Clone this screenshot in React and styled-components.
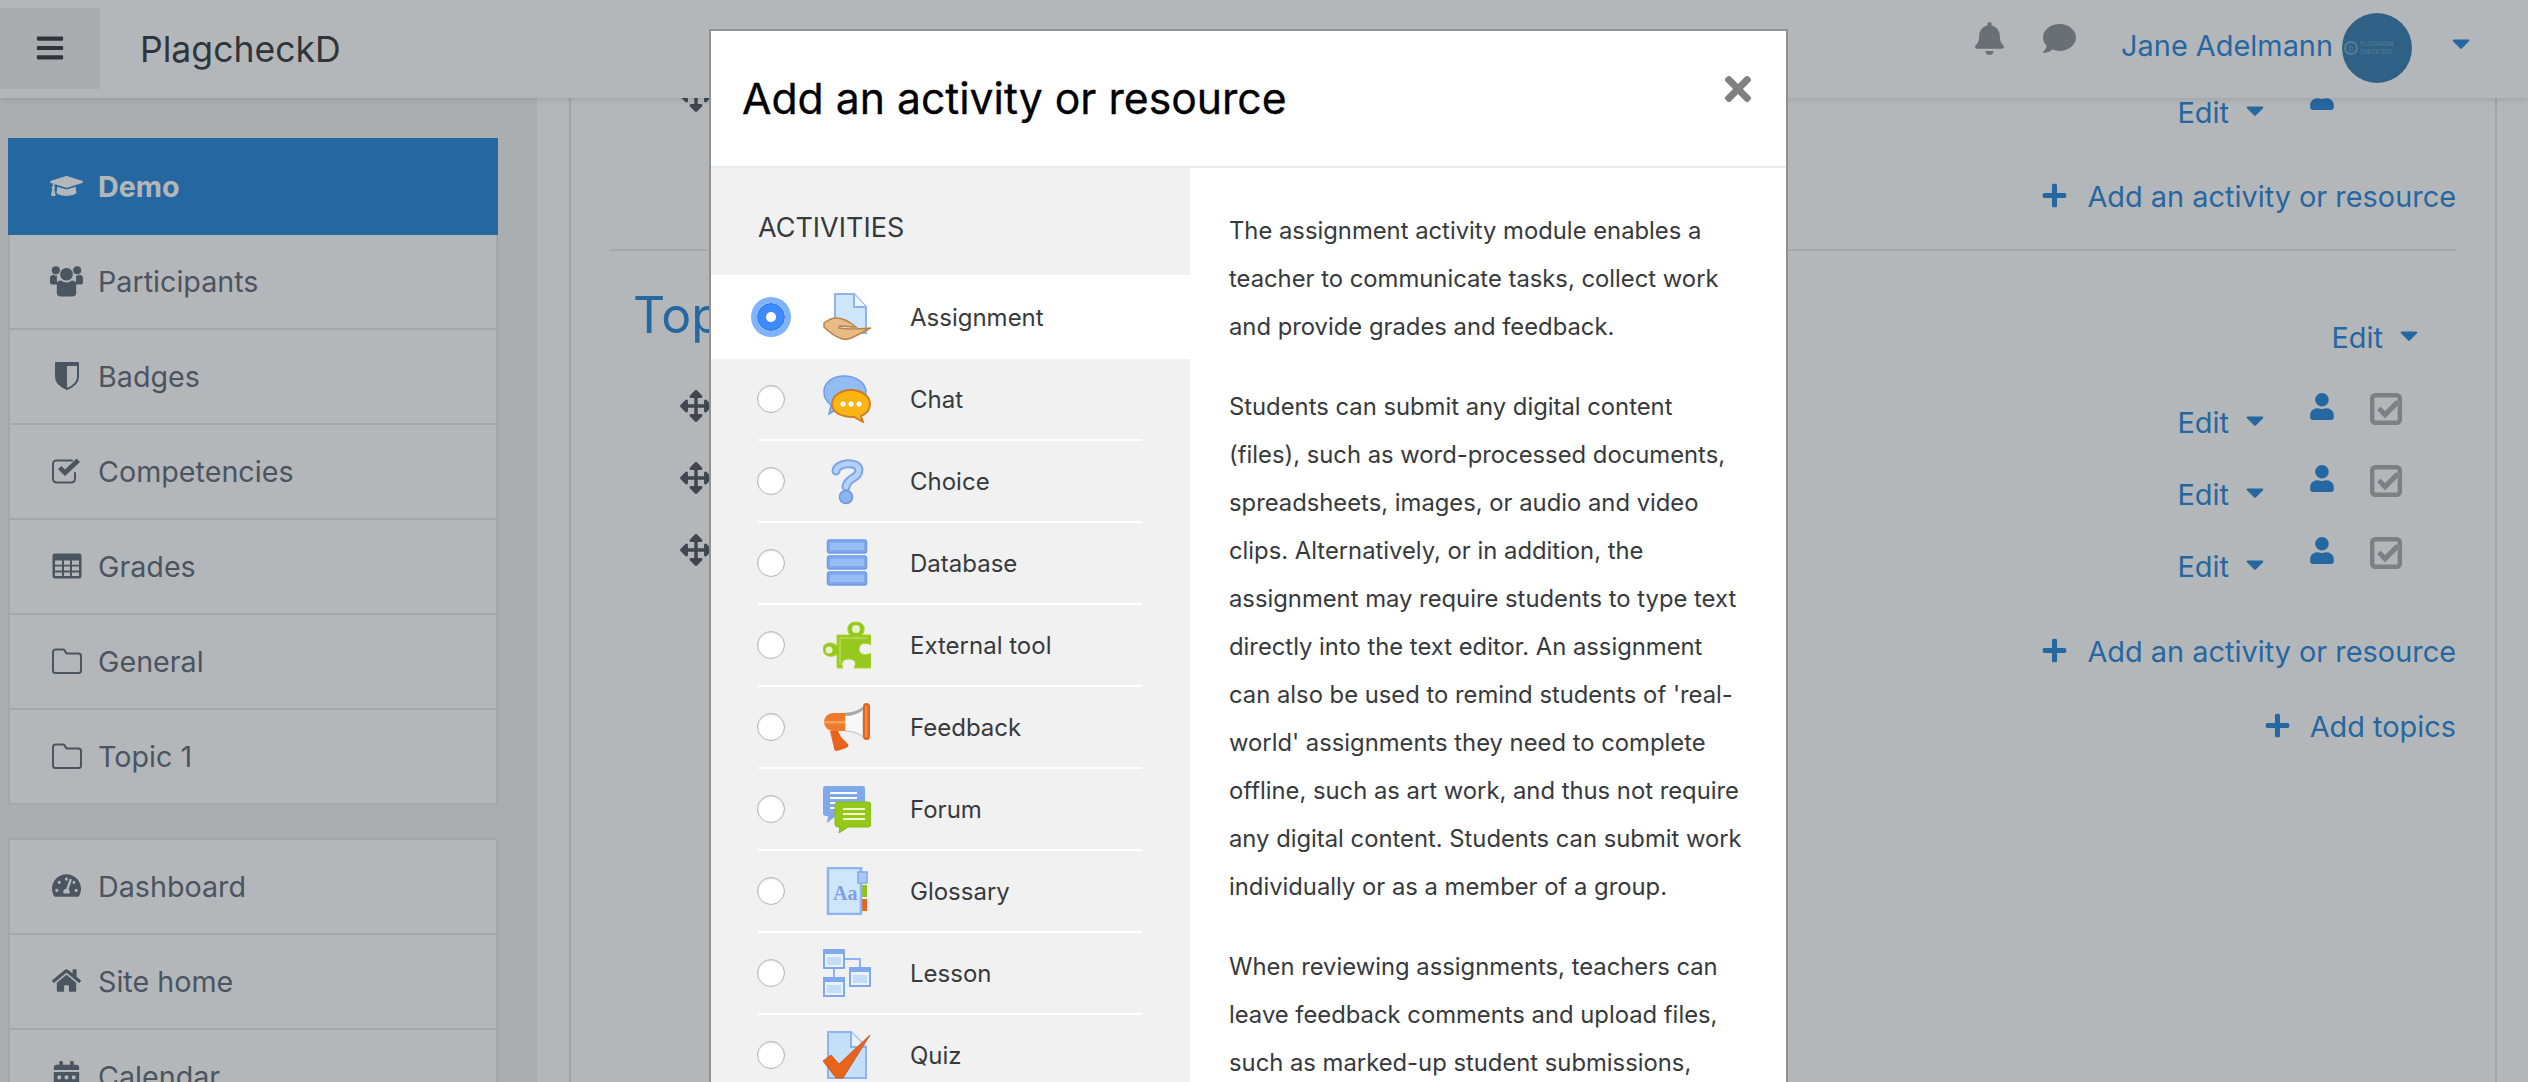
import React from 'react';
import styled, { createGlobalStyle } from 'styled-components';
import {
  FaGraduationCap, FaTachometerAlt, FaHome, FaCalendarAlt, FaBell, FaComment,
  FaUser, FaPlus, FaBars, FaArrowsAlt, FaTimes, FaCaretDown,
} from 'react-icons/fa';

const Global = createGlobalStyle`
  html, body { margin: 0; padding: 0; height: 100%; overflow: hidden; background: #fff; }
  * { box-sizing: border-box; }
  body { font-family: Inter, "Liberation Sans", sans-serif; -webkit-font-smoothing: antialiased; }
`;

const BLUE = '#1e80d6';

const Viewport = styled.div`
  position: relative;
  width: 2528px;
  height: 1082px;
  overflow: hidden;
`;
const Page = styled.div`
  display: flex;
  width: 100%;
  height: 100%;
  background: #fff;
`;

/* top bar */
const Navbar = styled.header`
  position: absolute;
  top: 0; left: 0; right: 0;
  height: 98px;
  z-index: 2;
  background: #fff;
  box-shadow: 0 2px 6px rgba(0,0,0,.12);
  display: flex;
  align-items: center;
  padding-right: 58px;
`;
const MenuButton = styled.div`
  width: 100px;
  height: 81px;
  margin-top: -2px;
  background: #eff0f0;
  display: flex;
  align-items: center;
  justify-content: center;
  color: #2c3236;
  font-size: 30px;
`;
const Brand = styled.div`
  margin-left: 40px;
  font-size: 35.6px;
  color: #2c3236;
  flex: 1;
`;
const NavIcon = styled.div`
  color: #8a8e92;
  display: flex;
  font-size: ${p => p.$size}px;
  margin-right: ${p => p.$gap}px;
  margin-top: -22px;
`;
const UserName = styled.div`
  font-size: 28.9px;
  color: ${BLUE};
  margin-top: -7px;
  margin-right: 9px;
`;
const Avatar = styled.div`
  width: 70px;
  height: 70px;
  border-radius: 50%;
  background: #2c78ab;
  color: #6ea3c6;
  display: flex;
  align-items: center;
  gap: 2px;
  padding-left: 2px;
  font-size: 5.5px;
  line-height: 8px;
  margin-top: -2px;
  margin-right: 40px;
  overflow: hidden;
`;
const AvatarMark = styled.span`
  width: 14px;
  height: 14px;
  flex: none;
  border: 2px solid #6ea3c6;
  border-radius: 50%;
  font-size: 9px;
  line-height: 10px;
  text-align: center;
`;
const Caret = styled(FaCaretDown)`
  color: ${BLUE};
  font-size: 30px;
  width: 18px;
  flex: none;
`;
const NavCaret = styled(Caret)`
  margin-top: -12px;
`;

/* side block */
const Sidebar = styled.aside`
  width: 537px;
  flex: none;
  background: #f0f1f1;
  padding: 138px 39px 0 8px;
`;
const NavGroup = styled.nav`
  border: 2px solid #e4e6e8;
  background: #fff;
  margin-bottom: 33px;
`;
const NavItem = styled.div`
  height: ${p => (p.$active ? 97 : p.$last ? 93 : 95)}px;
  margin: ${p => (p.$active ? '-2px -2px 0' : '0')};
  padding-left: ${p => (p.$active ? 42 : 40)}px;
  background: ${p => (p.$active ? BLUE : '#fff')};
  color: ${p => (p.$active ? '#fff' : '#5a6470')};
  border-bottom: ${p => (p.$active || p.$last ? '0' : '2px solid #e4e6e8')};
  font-size: 28.7px;
  font-weight: ${p => (p.$active ? 700 : 400)};
  display: flex;
  align-items: center;
`;
const NavGlyph = styled.span`
  width: 33px;
  margin-right: 15px;
  flex: none;
  display: flex;
  justify-content: ${p => (p.$wide ? 'flex-start' : 'center')};
  align-items: center;
  font-size: ${p => (p.$wide ? 40 : 29)}px;
  margin-top: -2px;
`;

/* main card */
const Content = styled.main`
  flex: none;
  width: 1928px;
  margin-left: 32px;
  border-left: 2px solid #e0e2e4;
  border-right: 2px solid #e0e2e4;
  padding: 75px 39px 0 39px;
  color: ${BLUE};
  font-size: 28.9px;
`;
const ItemRow = styled.div`
  height: 72px;
  display: flex;
  align-items: flex-start;
`;
const Grip = styled(FaArrowsAlt)`
  color: #464d55;
  font-size: 32px;
  margin: 5px 0 0 70px;
  flex: none;
`;
const EditMenu = styled.div`
  height: 36px;
  margin: ${p => (p.$head ? '35px 0 0 auto' : '20px 0 0 auto')};
  display: flex;
  align-items: center;
  line-height: 36px;
`;
const EditCaret = styled(Caret)`
  margin-left: 17px;
  margin-top: -6px;
`;
const Person = styled(FaUser)`
  font-size: 27px;
  width: 24px;
  margin: 8px 0 0 46px;
  flex: none;
`;
const CheckSlot = styled.span`
  width: 32px;
  height: 32px;
  margin: 8px 54px 0 36px;
  flex: none;
  color: #a6a9ac;
  display: block;
`;
const AddLine = styled.div`
  height: 36px;
  line-height: 36px;
  margin-top: ${p => p.$gap}px;
  display: flex;
  justify-content: flex-end;
  align-items: center;
`;
const AddIcon = styled(FaPlus)`
  font-size: 27px;
  margin-right: 19px;
  margin-top: -4px;
`;
const Rule = styled.hr`
  border: 0;
  border-top: 2px solid #e7e9ea;
  margin: 34px 0 0;
`;
const SectionHead = styled.div`
  height: 134px;
  padding: 34px 38px 0 23px;
  display: flex;
  align-items: flex-start;
`;
const SectionTitle = styled.h3`
  margin: 0;
  font-size: 50px;
  font-weight: 400;
  line-height: 60px;
`;

/* dimming layer */
const Backdrop = styled.div`
  position: absolute;
  inset: 0;
  z-index: 3;
  background: rgba(52,60,68,.37);
`;

/* dialog */
const Modal = styled.div`
  position: absolute;
  z-index: 4;
  top: 29px;
  left: 709px;
  width: 1079px;
  min-height: 1200px;
  background: #fff;
  border: 2px solid #8f9295;
`;
const ModalHead = styled.div`
  height: 137px;
  border-bottom: 2px solid #e9ecef;
  padding: 0 31px;
  display: flex;
  align-items: flex-start;
  justify-content: space-between;
`;
const ModalTitle = styled.h5`
  margin: 43px 0 0;
  font-size: 42.7px;
  line-height: 50px;
  font-weight: 400;
  color: #000;
  -webkit-text-stroke: .3px #000;
`;
const Close = styled(FaTimes)`
  color: #808080;
  font-size: 38px;
  margin: 39px -2px 0 0;
`;
const ModalBody = styled.div`
  display: flex;
  align-items: stretch;
`;
const Picker = styled.div`
  width: 479px;
  flex: none;
  background: #f1f1f1;
`;
const PickerHead = styled.div`
  height: 107px;
  padding: 40px 0 0 47px;
  font-size: 27px;
  line-height: 40px;
  color: #373a3c;
`;
const Option = styled.label`
  position: relative;
  display: flex;
  align-items: center;
  height: ${p => (p.$selected ? 84 : 82)}px;
  padding: ${p => (p.$selected ? 0 : '0 0 2px')} ;
  padding-left: 46px;
  background: ${p => (p.$selected ? '#fff' : 'transparent')};
  font-size: 24px;
  color: #373a3c;
  &::after {
    content: '';
    display: ${p => (p.$selected ? 'none' : 'block')};
    position: absolute;
    left: 47px;
    right: 48px;
    bottom: 0;
    height: 2px;
    background: #fff;
  }
`;
const Radio = styled.input.attrs({ type: 'radio', readOnly: true })`
  appearance: none;
  margin: 0;
  width: 28px;
  height: 28px;
  flex: none;
  border-radius: 50%;
  background: #fff;
  border: 1.5px solid #b4b4b4;
  box-shadow: inset 0 1px 2px rgba(0,0,0,.12);
  &:checked {
    background: radial-gradient(circle, #fff 0 4.5px, #3d8bff 5.5px);
    border: 1.5px solid #2373f0;
    box-shadow: 0 0 0 6px #80b3ff;
  }
`;
const Glyph = styled.svg`
  width: 48px;
  height: 48px;
  flex: none;
  margin: 0 39px 0 38px;
`;
const Describe = styled.div`
  flex: 1;
  padding: 39px 36px 0 39px;
  font-size: 23.8px;
  line-height: 48px;
  color: #373a3c;
  & p { margin: 0 0 32px; }
`;

const Users = () => (
  <svg width="34" height="32" viewBox="0 0 34 32" fill="currentColor">
    <circle cx="6" cy="5" r="4.200" /><circle cx="28" cy="5" r="4.200" />
    <path d="M0 13c0-2.500 2-3.500 4-3.500 1 .8 2 1.200 3.500 1.200C6.500 13 7 17 9 19.500H2c-1.500 0-2-1-2-2.500z" />
    <path d="M34 13c0-2.500-2-3.500-4-3.500-1 .8-2 1.200-3.500 1.200 1 2.300.5 6.300-1.500 8.800h7c1.500 0 2-1 2-2.500z" />
    <circle cx="17" cy="9" r="6.500" />
    <path d="M7 20c0-3 2-4.500 4.500-4.500 1.500 1.300 3.500 2 5.500 2s4-.7 5.500-2C25 15.500 27 17 27 20v8c0 2.500-1.500 4-4 4H11c-2.500 0-4-1.500-4-4z" />
  </svg>
);
const Shield = () => (
  <svg width="24" height="28" viewBox="0 0 24 28" fill="none">
    <path d="M1 1h22v14c0 5-5 9.500-11 12C6 24.500 1 20 1 15z" stroke="currentColor" strokeWidth="2" strokeLinejoin="round" />
    <path d="M1 1h11v26C6 24.500 1 20 1 15z" fill="currentColor" />
    <path d="M12 1h11v3H12z" fill="currentColor" />
  </svg>
);
const CheckedBox = () => (
  <svg width="30" height="26" viewBox="0 0 30 26" fill="none">
    <path d="M23 15v6a3.500 3.500 0 0 1-3.500 3.500h-15A3.500 3.500 0 0 1 1 21V6a3.500 3.500 0 0 1 3.500-3.500H20" stroke="currentColor" strokeWidth="2" strokeLinecap="round" />
    <path d="M6 11l7 7L28 4l-3.500-3.500L13 11.500 9.500 8z" fill="currentColor" />
  </svg>
);
const TableGlyph = () => (
  <svg width="30" height="26" viewBox="0 0 30 26">
    <path fillRule="evenodd" fill="currentColor" d="M3 .5h24A2.500 2.500 0 0 1 29.500 3v20a2.500 2.500 0 0 1-2.500 2.500H3A2.500 2.500 0 0 1 .5 23V3A2.500 2.500 0 0 1 3 .5zM3 7.500v4.300h7V7.500zm9 0v4.300h6V7.500zm8 0v4.300h7V7.500zM3 13.500v4h7v-4zm9 0v4h6v-4zm8 0v4h7v-4zM3 19.500v3.500h7v-3.500zm9 0v3.500h6v-3.500zm8 0v3.500h7v-3.500z" />
  </svg>
);
const FolderGlyph = () => (
  <svg width="30" height="26" viewBox="0 0 30 26" fill="none">
    <path d="M3.500 1.500h7.500a2 2 0 0 1 1.600.9L14.500 5.500h12A2.500 2.500 0 0 1 29 8v14.500a2.500 2.500 0 0 1-2.500 2.500h-23A2.500 2.500 0 0 1 1 22.500V4a2.500 2.500 0 0 1 2.500-2.500z" stroke="currentColor" strokeWidth="2" />
  </svg>
);
const GrayCheck = () => (
  <svg width="32" height="32" viewBox="0 0 32 32">
    <rect x="2.200" y="2.200" width="27.600" height="27.600" rx="3" fill="none" stroke="currentColor" strokeWidth="4.400" />
    <path d="M7 17l3.500-3.500 4.500 4.500L26 7l4 3.500L15 25.500z" fill="currentColor" stroke="#fff" strokeOpacity=".35" strokeWidth=".6" />
  </svg>
);

const AssignmentIcon = () => (
  <Glyph viewBox="0 0 48 48">
    <path d="M12 1h19l12 13v26H12z" fill="#cfe5fa" stroke="#8db4f0" strokeWidth="2" />
    <path d="M31 1v13h12" fill="#eef6fe" stroke="#8db4f0" strokeWidth="2" />
    <path d="M1 30c4-3 8-5 12-5 7 0 14 4 20 9-5 0-11-1-16-1l-1 2c10 2 21 1 32 0-4 2-13 7-20 10-4 2-7 2-11 0C11 43 5 38 1 34z" fill="#e9bb84" stroke="#b8844a" strokeWidth="1.500" />
  </Glyph>
);
const ChatIcon = () => (
  <Glyph viewBox="0 0 48 48">
    <path d="M21 1c12 0 22 7 22 16S33 33 21 33c-3 0-5 0-7 1l-8 5 2-9C4 27 1 22 1 17 1 8 9 1 21 1z" fill="#93bcf3" stroke="#6f9de8" strokeWidth="1.500" />
    <path d="M28 15c10 0 19 6 19 14 0 6-4 10-9 12l2 6-9-5C17 42 9 37 9 29c0-8 9-14 19-14z" fill="#fbb416" stroke="#d07a1e" strokeWidth="1.800" />
    <circle cx="20" cy="29" r="2.600" fill="#fff" /><circle cx="28" cy="29" r="2.600" fill="#fff" /><circle cx="36" cy="29" r="2.600" fill="#fff" />
  </Glyph>
);
const ChoiceIcon = () => (
  <Glyph viewBox="0 0 48 48">
    <path d="M13 14C13 6 35 3 36 13c0 9-12 7-13 17" fill="none" stroke="#7aa5ea" strokeWidth="9" strokeLinecap="round" />
    <path d="M13 14C13 6 35 3 36 13c0 9-12 7-13 17" fill="none" stroke="#b4d2f7" strokeWidth="5" strokeLinecap="round" />
    <circle cx="23" cy="40" r="6.500" fill="#8cb4ef" stroke="#6a97e6" strokeWidth="1.500" />
  </Glyph>
);
const DatabaseIcon = () => (
  <Glyph viewBox="0 0 48 48">
    {[1, 17, 33].map(y => (
      <g key={y}>
        <rect x="4.500" y={y} width="39" height="13" rx="2" fill="#7fa9ec" stroke="#6f9de8" strokeWidth="1.500" />
        <rect x="7" y={y + 3} width="34" height="7" fill="#98bdf2" />
      </g>
    ))}
  </Glyph>
);
const ToolIcon = () => (
  <Glyph viewBox="0 0 48 48">
    <path d="M14 14h13c-4-5-3-13 6-13s10 8 6 13h9v10c-5-3-12-2-12 4s7 7 12 4v15H31c3-5 1-9-5-9s-9 4-6 9H14V33c-4 4-14 3-14-5 0-7 10-8 14-3z" fill="#96c81e" stroke="#a9d62e" strokeWidth="1" />
    <path d="M17 17h28M17 17v27" stroke="#c8e67a" strokeWidth="1" fill="none" />
    <circle cx="33" cy="8" r="4" fill="#e8f3cc" /><circle cx="6" cy="29" r="3.500" fill="#e8f3cc" />
  </Glyph>
);
const FeedbackIcon = () => (
  <Glyph viewBox="0 0 48 48">
    <path d="M7 28h8l3 6 7 7c1 2 0 3-2 4l-9 3c-2 0-3-1-3-3z" fill="#e8641c" />
    <path d="M22 10c7 0 13-2 18-6v30c-5-4-11-6-18-6z" fill="#f8f8f8" stroke="#bdbdbd" strokeWidth="1" />
    <path d="M22 10v3c7 0 13-2 18-6V4c-5 4-11 6-18 6z" fill="#a8a8a8" />
    <path d="M10 10h12v18H10a9 9 0 0 1 0-18z" fill="#ee7a2c" />
    <rect x="1" y="18" width="21" height="2.500" fill="#f6a060" />
    <rect x="40" y="0" width="7" height="37" rx="3.500" fill="#e5631c" />
    <rect x="42" y="3" width="2.500" height="31" fill="#f28a46" />
  </Glyph>
);
const ForumIcon = () => (
  <Glyph viewBox="0 0 48 48">
    <path d="M3 1h36a3 3 0 0 1 3 3v24a3 3 0 0 1-3 3H13l-9 7 1-7H3a3 3 0 0 1-3-3V4a3 3 0 0 1 3-3z" fill="#7fa9ec" />
    <path d="M7 8h27M7 13h27M7 18h27M7 23h20" stroke="#fff" strokeWidth="2" />
    <path d="M15 17h30a3 3 0 0 1 3 3v19a3 3 0 0 1-3 3H25l-9 6 1-6h-2a3 3 0 0 1-3-3V20a3 3 0 0 1 3-3z" fill="#94c81a" stroke="#84b814" />
    <path d="M20 24h22M20 29h22M20 34h22" stroke="#eef8c8" strokeWidth="2.200" />
  </Glyph>
);
const GlossaryIcon = () => (
  <Glyph viewBox="0 0 48 48">
    <rect x="34" y="18" width="10" height="12" fill="#8fc31a" />
    <rect x="34" y="32" width="10" height="12" fill="#e5631c" />
    <rect x="5" y="1" width="33" height="46" fill="#cfe5fa" stroke="#8db4f0" strokeWidth="2.500" />
    <rect x="35" y="5" width="9" height="11" fill="#a9c8f5" stroke="#7fa9ec" strokeWidth="1.500" />
    <text x="10" y="33" fontFamily="Liberation Serif, serif" fontWeight="700" fontSize="20" fill="#7d9fdc">Aa</text>
  </Glyph>
);
const LessonIcon = () => (
  <Glyph viewBox="0 0 48 48">
    <path d="M11 20v10M22 10h15v10" fill="none" stroke="#8db4f0" strokeWidth="2" />
    {[[1, 1, 20, 18], [27, 19, 20, 18], [1, 29, 20, 18]].map(([x, y, w, h]) => (
      <g key={y}>
        <rect x={x} y={y} width={w} height={h} fill="#eaf3fd" stroke="#7fa9ec" strokeWidth="2" />
        <rect x={x} y={y + 1} width={w} height="3" fill="#7fa9ec" />
        <rect x={x + 3} y={y + 7} width={w - 6} height={h - 10} fill="#c3ddf7" />
      </g>
    ))}
  </Glyph>
);
const QuizIcon = () => (
  <Glyph viewBox="0 0 48 48">
    <path d="M5 1h23l15 15v31H5z" fill="#c4dff8" stroke="#8db4f0" strokeWidth="2" />
    <path d="M28 1v15h15" fill="#e6f1fc" stroke="#8db4f0" strokeWidth="2" />
    <path d="M0 30l8-6 8 9L47 4 20 47h-7z" fill="#e8641c" stroke="#c94f10" strokeWidth=".8" />
  </Glyph>
);

const activities = [
  ['Assignment', AssignmentIcon], ['Chat', ChatIcon], ['Choice', ChoiceIcon], ['Database', DatabaseIcon],
  ['External tool', ToolIcon], ['Feedback', FeedbackIcon], ['Forum', ForumIcon], ['Glossary', GlossaryIcon],
  ['Lesson', LessonIcon], ['Quiz', QuizIcon],
];

const courseNav = [
  ['Demo', <FaGraduationCap />, true],
  ['Participants', <Users />],
  ['Badges', <Shield />],
  ['Competencies', <CheckedBox />],
  ['Grades', <TableGlyph />],
  ['General', <FolderGlyph />],
  ['Topic 1', <FolderGlyph />],
];
const siteNav = [
  ['Dashboard', <FaTachometerAlt />],
  ['Site home', <FaHome />],
  ['Calendar', <FaCalendarAlt />],
];

const Row = ({ check = true, grip = true }) => (
  <ItemRow>
    {grip && <Grip />}
    <EditMenu>Edit<EditCaret /></EditMenu>
    <Person />
    <CheckSlot>{check && <GrayCheck />}</CheckSlot>
  </ItemRow>
);

export default function App() {
  return (
    <Viewport>
      <Global />
      <Page>
        <Sidebar>
          <NavGroup>
            {courseNav.map(([label, icon, active], i) => (
              <NavItem key={label} $active={active} $last={i === courseNav.length - 1}>
                <NavGlyph $wide={active}>{icon}</NavGlyph>{label}
              </NavItem>
            ))}
          </NavGroup>
          <NavGroup>
            {siteNav.map(([label, icon]) => (
              <NavItem key={label}><NavGlyph>{icon}</NavGlyph>{label}</NavItem>
            ))}
          </NavGroup>
        </Sidebar>
        <Content>
          <Row check={false} />
          <AddLine $gap={32}><AddIcon />Add an activity or resource</AddLine>
          <Rule />
          <SectionHead>
            <SectionTitle>Topic 1</SectionTitle>
            <EditMenu $head>Edit<EditCaret /></EditMenu>
          </SectionHead>
          <Row /><Row /><Row />
          <AddLine $gap={33}><AddIcon />Add an activity or resource</AddLine>
          <AddLine $gap={39}><AddIcon />Add topics</AddLine>
        </Content>
      </Page>
      <Navbar>
        <MenuButton><FaBars /></MenuButton>
        <Brand>PlagcheckD</Brand>
        <NavIcon $size={33} $gap={37}><FaBell /></NavIcon>
        <NavIcon $size={33} $gap={45}><FaComment /></NavIcon>
        <UserName>Jane Adelmann</UserName>
        <Avatar><AvatarMark>p</AvatarMark><span>PLAGIARISM<br />CHECK.ORG</span></Avatar>
        <NavCaret />
      </Navbar>
      <Backdrop />
      <Modal>
        <ModalHead>
          <ModalTitle>Add an activity or resource</ModalTitle>
          <Close />
        </ModalHead>
        <ModalBody>
          <Picker>
            <PickerHead>ACTIVITIES</PickerHead>
            {activities.map(([label, Icon], i) => (
              <Option key={label} $selected={i === 0}>
                <Radio name="activity" defaultChecked={i === 0} />
                <Icon />
                {label}
              </Option>
            ))}
          </Picker>
          <Describe>
            <p>The assignment activity module enables a teacher to communicate tasks, collect work and provide grades and feedback.</p>
            <p>Students can submit any digital content (files), such as word-processed documents, spreadsheets, images, or audio and video clips. Alternatively, or in addition, the assignment may require students to type text directly into the text editor. An assignment can also be used to remind students of 'real-world' assignments they need to complete offline, such as art work, and thus not require any digital content. Students can submit work individually or as a member of a group.</p>
            <p>When reviewing assignments, teachers can leave feedback comments and upload files, such as marked-up student submissions, documents with comments or spoken audio feedback.</p>
          </Describe>
        </ModalBody>
      </Modal>
    </Viewport>
  );
}
